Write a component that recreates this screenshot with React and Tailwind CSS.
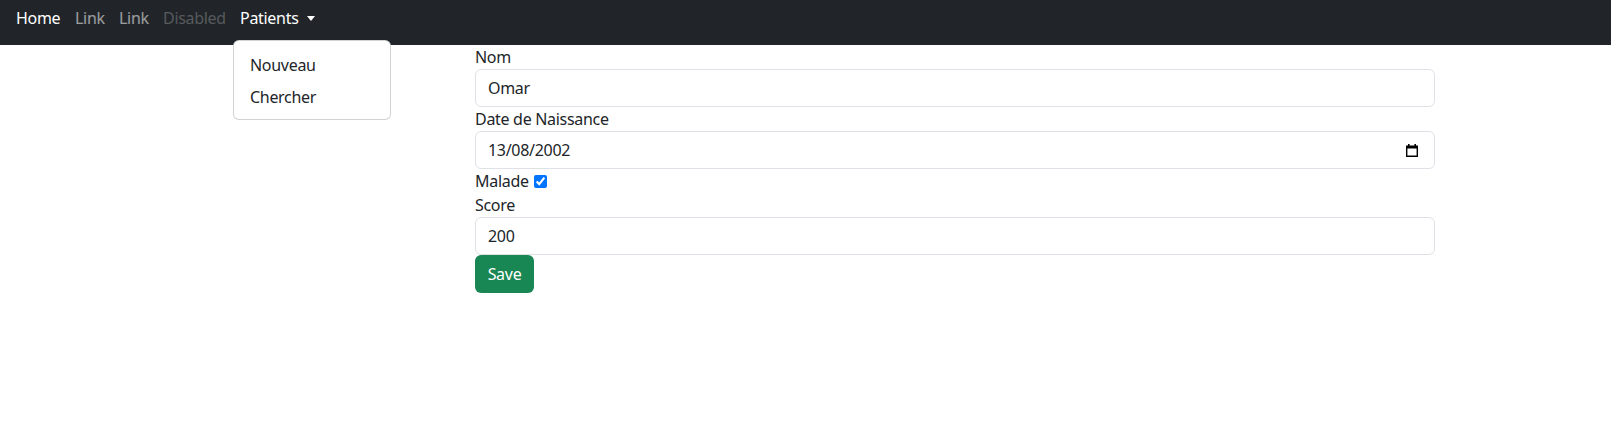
import React from "react";

const font = { fontFamily: '"Segoe UI", "Noto Sans", "Liberation Sans", sans-serif' };

function CalendarIcon() {
  return (
    <svg width="14" height="13" viewBox="0 0 14 13" aria-hidden="true">
      <rect x="3" y="0" width="1.6" height="2.5" fill="#000" />
      <rect x="9.4" y="0" width="1.6" height="2.5" fill="#000" />
      <path
        fillRule="evenodd"
        fill="#000"
        d="M1 1.5H13V13H1Z M2.4 4.6V11.6H11.6V4.6Z"
      />
    </svg>
  );
}

export default function App() {
  return (
    <div className="min-h-[435px] bg-white text-[#212529] text-base leading-6 tracking-[-0.3px]" style={font}>
      <nav className="h-[45px] bg-[#212529] flex items-start px-2 pt-[6px]">
        <ul className="flex items-center">
          <li className="w-[59px]"><a className="block px-2 text-white whitespace-nowrap">Home</a></li>
          <li className="w-[44px]"><a className="block px-2 text-white/55 whitespace-nowrap">Link</a></li>
          <li className="w-[44px]"><a className="block px-2 text-white/55 whitespace-nowrap">Link</a></li>
          <li className="w-[77px]"><a className="block px-2 text-white/25 whitespace-nowrap">Disabled</a></li>
          <li className="relative">
            <a className="flex items-center px-2 text-white whitespace-nowrap">
              Patients
              <span className="ml-[8px] w-0 h-0 border-x-[4px] border-x-transparent border-t-[5px] border-t-white" />
            </a>
            <div className="absolute left-[1px] top-[34px] z-10 w-[158px] h-[80px] bg-white border border-black/[0.175] rounded-[6px] py-2">
              <a className="block px-4 py-1 text-[#212529]">Nouveau</a>
              <a className="block px-4 py-1 text-[#212529]">Chercher</a>
            </div>
          </li>
        </ul>
      </nav>
      <div className="pl-[475px]">
        <form className="w-[960px] flex flex-col">
          <label className="block">Nom</label>
          <div className="h-[38px] border border-[#dee2e6] rounded-[6px] px-3 py-[6px] flex items-center">Omar</div>
          <label className="block">Date de Naissance</label>
          <div className="h-[38px] border border-[#dee2e6] rounded-[6px] pl-3 pr-[15px] py-[6px] flex items-center justify-between">
            <span>13/08/2002</span>
            <CalendarIcon />
          </div>
          <div className="flex items-center h-6">
            <span className="whitespace-nowrap">Malade</span>
            <input type="checkbox" defaultChecked className="ml-[5px] w-[13px] h-[13px] accent-[#0075ff]" />
          </div>
          <label className="block">Score</label>
          <div className="h-[38px] border border-[#dee2e6] rounded-[6px] px-3 py-[6px] flex items-center">200</div>
          <div>
            <button type="button" className="h-[38px] w-[59px] bg-[#198754] text-white rounded-[6px]">Save</button>
          </div>
        </form>
      </div>
    </div>
  );
}
